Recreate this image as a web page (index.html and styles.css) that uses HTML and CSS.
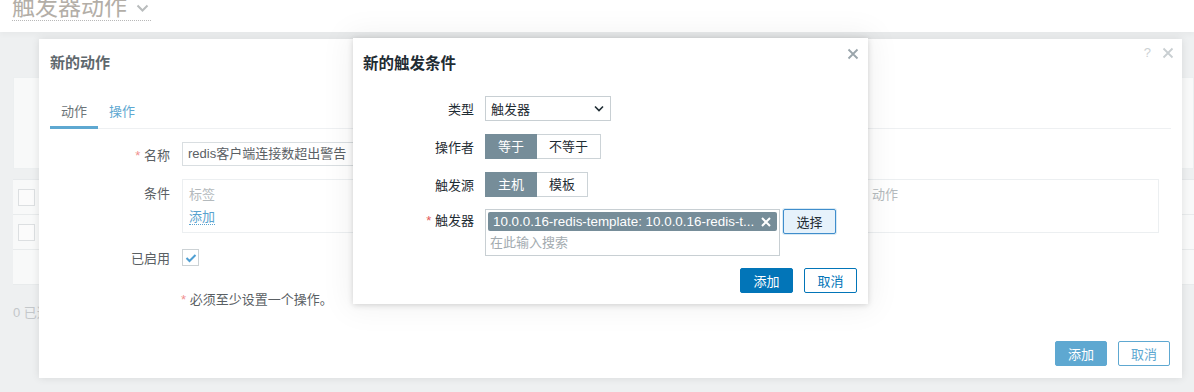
FILE: index.html
```html
<!DOCTYPE html>
<html lang="zh-CN">
<head>
<meta charset="utf-8">
<title>触发器动作</title>
<link rel="stylesheet" href="styles.css">
</head>
<body>
<div class="page">
  <div class="page-head">
    <h1 class="page-title"><span>触发器动作</span><svg class="title-chev" width="13" height="9" viewBox="0 0 13 9"><path d="M1.5 1.5 L6.5 6.5 L11.5 1.5" fill="none" stroke="#b9bcbd" stroke-width="2"/></svg></h1>
  </div>
  <div class="page-body">
    <div class="filter-panel"></div>
    <div class="table-panel">
      <div class="trow"><span class="pcb"></span></div>
      <div class="trow"><span class="pcb"></span></div>
      <div class="trow"></div>
    </div>
    <div class="page-foot">0 已选择</div>
  </div>
</div>

<div class="dialog d1">
  <div class="d1-head">
    <h2 class="d1-title">新的动作</h2>
    <div class="d1-tools">
      <span class="help">?</span>
      <svg width="12" height="12" viewBox="0 0 12 12"><path d="M1.5 1.5 L10.5 10.5 M10.5 1.5 L1.5 10.5" stroke="#c9cfd2" stroke-width="1.8" fill="none"/></svg>
    </div>
  </div>
  <ul class="tabs">
    <li class="tab active">动作</li>
    <li class="tab">操作</li>
  </ul>
  <div class="d1-form">
    <div class="frow r-name">
      <label class="lbl1"><span class="req1">*</span> 名称</label>
      <div class="input1">redis客户端连接数超出警告</div>
    </div>
    <div class="frow r-cond">
      <label class="lbl1 lbl-top">条件</label>
      <div class="cond-box">
        <div class="cond-head"><span>标签</span><span>名称</span><span>动作</span></div>
        <a class="link1">添加</a>
      </div>
    </div>
    <div class="frow r-enabled">
      <label class="lbl1">已启用</label>
      <span class="cb1"><svg width="12" height="10" viewBox="0 0 12 10"><path d="M1.5 5 L4.5 8 L10.5 2" fill="none" stroke="#4f9fd3" stroke-width="2"/></svg></span>
    </div>
    <div class="frow r-warn">
      <span class="lbl1"></span>
      <div class="warn"><span class="req1">*</span> 必须至少设置一个操作。</div>
    </div>
  </div>
  <div class="d1-foot">
    <button class="btn1 primary1">添加</button>
    <button class="btn1 alt1">取消</button>
  </div>
</div>

<div class="dialog d2">
  <div class="d2-head">
    <h2 class="d2-title">新的触发条件</h2>
    <svg class="d2-close" width="12" height="12" viewBox="0 0 12 12"><path d="M1.5 1.5 L10.5 10.5 M10.5 1.5 L1.5 10.5" stroke="#9aa5ab" stroke-width="1.8" fill="none"/></svg>
  </div>
  <div class="d2-form">
    <div class="row2">
      <label class="lbl2">类型</label>
      <div class="select2"><span>触发器</span><svg width="10" height="7" viewBox="0 0 10 7"><path d="M1 1.5 L5 5.5 L9 1.5" fill="none" stroke="#1f2c33" stroke-width="1.6"/></svg></div>
    </div>
    <div class="row2">
      <label class="lbl2">操作者</label>
      <div class="seg"><span class="seg-item on s52">等于</span><span class="seg-item">不等于</span></div>
    </div>
    <div class="row2">
      <label class="lbl2">触发源</label>
      <div class="seg"><span class="seg-item on s52">主机</span><span class="seg-item">模板</span></div>
    </div>
    <div class="row2 row-ms">
      <label class="lbl2 lbl2-top"><span class="req2">*</span> 触发器</label>
      <div class="ms">
        <div class="chip"><span class="chip-text">10.0.0.16-redis-template: 10.0.0.16-redis-t...</span><svg width="10" height="10" viewBox="0 0 10 10"><path d="M1 1 L9 9 M9 1 L1 9" stroke="#fff" stroke-width="2" fill="none"/></svg></div>
        <div class="ms-ph">在此输入搜索</div>
      </div>
      <button class="btn-select">选择</button>
    </div>
  </div>
  <div class="d2-foot">
    <button class="btn2 primary2">添加</button>
    <button class="btn2 alt2">取消</button>
  </div>
</div>
</body>
</html>
```

FILE: styles.css
```css
* { box-sizing: border-box; }
html, body { margin: 0; padding: 0; }
body {
  width: 1194px;
  height: 392px;
  overflow: hidden;
  font-family: "Liberation Sans", "Noto Sans CJK SC", sans-serif;
  font-size: 13px;
  color: #1f2c33;
  position: relative;
}
ul { margin: 0; padding: 0; list-style: none; }
h1, h2 { margin: 0; }
button { font-family: inherit; font-size: 13px; }

/* ---------- page behind ---------- */
.page {
  width: 1194px;
  height: 392px;
  background: #eef0f1;
  display: flex;
  flex-direction: column;
}
.page-head {
  height: 32px;
  background: #fff;
  padding-left: 12px;
  box-shadow: 0 3px 5px rgba(0,0,0,0.03);
}
.page-title {
  display: inline-flex;
  align-items: center;
  gap: 9px;
  margin-top: -5px;
  height: 26px;
  font-size: 23px;
  font-weight: normal;
  line-height: 23px;
  color: #b3aea7;
  border-bottom: 1px dotted #b8b8b8;
  padding-right: 2px;
}
.title-chev { margin-top: 2px; }
.page-body {
  flex: 1;
  padding: 45px 0 0 13px;
}
.filter-panel {
  height: 92px;
  background: #f8f9f9;
  border: 1px solid #eceff0;
}
.table-panel {
  margin-top: 10px;
  background: #f8f9f9;
  border-top: 1px solid #e6e9eb;
}
.trow {
  height: 35px;
  border-bottom: 1px solid #e8ebec;
  display: flex;
  align-items: center;
  padding-left: 5px;
}
.pcb {
  width: 17px;
  height: 17px;
  border: 1px solid #dcdfe1;
  background: #fbfbfb;
}
.page-foot {
  margin-top: 17px;
  color: #c3c7ca;
  font-size: 13px;
}

/* ---------- dialogs ---------- */
.dialog {
  position: absolute;
  background: #fff;
  display: flex;
  flex-direction: column;
}
.d1 {
  left: 39px;
  top: 39px;
  width: 1143px;
  height: 339px;
  box-shadow: 0 0 8px rgba(0,0,0,0.10);
}
.d1-head {
  height: 46px;
  padding: 0 11px;
  display: flex;
  align-items: center;
  justify-content: space-between;
}
.d1-title {
  font-size: 15px;
  font-weight: bold;
  color: #5f686d;
  margin-top: -2px;
}
.d1-tools {
  display: flex;
  align-items: center;
  gap: 11px;
  margin-top: -19px;
  margin-right: -3px;
}
.help { color: #ccd1d4; font-size: 13px; }
.tabs {
  display: flex;
  margin: 12px 11px 0;
  border-bottom: 1px solid #eef0f2;
}
.tab {
  padding: 0 11px;
  line-height: 29px;
  border-bottom: 3px solid transparent;
  margin-bottom: -1px;
  color: #5ea8d1;
}
.tab.active {
  color: #6c7478;
  border-bottom-color: #5ea8d1;
}
.d1-form {
  margin-top: 13px;
  padding: 0 11px;
  color: #5a6064;
}
.frow {
  display: flex;
  gap: 12px;
  align-items: center;
}
.lbl1 {
  width: 120px;
  text-align: right;
  flex: none;
}
.lbl-top { align-self: flex-start; padding-top: 4px; }
.req1 { color: #f09090; }
.input1 {
  width: 453px;
  height: 24px;
  border: 1px solid #d9dee1;
  padding: 0 5px;
  line-height: 22px;
}
.r-cond { margin-top: 13px; }
.cond-box {
  width: 977px;
  height: 54px;
  border: 1px solid #eceff1;
  padding: 6px 6px 0;
}
.cond-head {
  display: grid;
  grid-template-columns: 340px 343px 1fr;
  color: #b4babd;
  line-height: 18px;
}
.link1 {
  display: inline-block;
  margin-top: 5px;
  color: #5aa3cf;
  line-height: 15px;
  border-bottom: 1px dotted #5aa3cf;
}
.r-enabled { margin-top: 15px; }
.cb1 {
  width: 17px;
  height: 17px;
  border: 1px solid #ccd2d5;
  display: flex;
  align-items: center;
  justify-content: center;
}
.r-warn { margin-top: 22px; gap: 11px; }
.d1-foot {
  margin-top: auto;
  padding: 0 12px 12px;
  display: flex;
  justify-content: flex-end;
  gap: 11px;
}
.btn1 {
  width: 52px;
  height: 25px;
  border-radius: 2px;
  border: 1px solid #5ea8d1;
  padding: 0;
}
.primary1 { background: #5ea8d1; color: #fff; }
.alt1 { background: #fff; color: #5ea8d1; }

/* ---------- dialog 2 ---------- */
.d2 {
  left: 353px;
  top: 38px;
  width: 515px;
  height: 266px;
  box-shadow: 0 1px 6px rgba(0,0,0,0.16), 0 0 28px 6px rgba(0,0,0,0.05);
}
.d2-head {
  height: 48px;
  padding: 0 10px;
  display: flex;
  align-items: center;
  justify-content: space-between;
}
.d2-title {
  font-size: 15.5px;
  font-weight: bold;
  color: #1f2c33;
  margin-top: -1px;
}
.d2-close { margin-top: -17px; margin-right: -1px; }
.d2-form {
  margin-top: 10px;
  padding: 0 10px;
  display: flex;
  flex-direction: column;
  gap: 13px;
}
.row2 {
  display: flex;
  align-items: center;
  gap: 11px;
}
.row-ms { align-items: flex-start; margin-top: -1px; }
.lbl2 {
  width: 111px;
  text-align: right;
  flex: none;
}
.lbl2-top { line-height: 23px; }
.req2 { color: #e45959; }
.select2 {
  width: 126px;
  height: 25px;
  border: 1px solid #c8cfd3;
  display: flex;
  align-items: center;
  justify-content: space-between;
  padding: 0 6px 0 5px;
}
.seg { display: flex; height: 25px; }
.seg-item {
  padding: 0 12px;
  line-height: 23px;
  border: 1px solid #ccd3d7;
  border-left: none;
  background: #fff;
}
.seg-item.on {
  background: #768d99;
  border-color: #768d99;
  color: #fff;
  border-left: 1px solid #768d99;
}
.s52 { width: 52px; text-align: center; padding: 0; }
.ms {
  width: 295px;
  height: 47px;
  border: 1px solid #c8cfd3;
  padding: 2px;
}
.chip {
  height: 19px;
  background: #768d99;
  color: #fff;
  display: flex;
  align-items: center;
  justify-content: space-between;
  padding: 0 6px 0 5px;
  border-radius: 2px;
}
.chip-text { white-space: nowrap; line-height: 19px; font-size: 13.4px; }
.ms-ph {
  color: #a3abb0;
  line-height: 23px;
  padding-left: 2px;
}
.btn-select {
  margin-left: -8px;
  width: 53px;
  height: 25px;
  border: 1px solid #3f8dcc;
  background: #e6f2fb;
  color: #1f2c33;
  border-radius: 2px;
  box-shadow: 0 0 0 1px rgba(2,117,184,0.15);
  padding: 0;
}
.d2-foot {
  margin-top: auto;
  padding: 0 11px 11px;
  display: flex;
  justify-content: flex-end;
  gap: 11px;
}
.btn2 {
  width: 53px;
  height: 25px;
  border-radius: 2px;
  border: 1px solid #0275b8;
  padding: 0;
}
.primary2 { background: #0275b8; color: #fff; }
.alt2 { background: #fff; color: #0275b8; }
```
